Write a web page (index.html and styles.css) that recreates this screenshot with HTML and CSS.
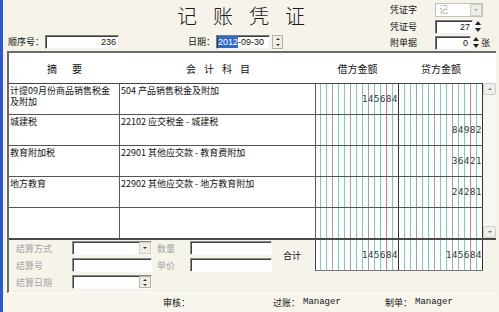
FILE: index.html
```html
<!DOCTYPE html>
<html lang="zh">
<head>
<meta charset="utf-8">
<title>记账凭证</title>
<link rel="stylesheet" href="styles.css">
</head>
<body>
<div class="win">
  <div class="top">
    <div class="top-left">
      <div class="title">记账凭证</div>
      <div class="meta">
        <span class="lbl seq-lbl">顺序号：</span>
        <span class="inp num seq">236</span>
        <span class="lbl date-lbl">日期：</span>
        <span class="inp date"><span class="hl">2012</span>-09-30</span>
        <span class="spin btn"><i class="up"></i><i class="dn"></i></span>
      </div>
    </div>
    <div class="top-right">
      <div class="rrow r1"><span class="lbl rl">凭证字</span><span class="inp combo"><span class="ctext">记</span><span class="drop"><i class="dn"></i></span></span></div>
      <div class="rrow r2"><span class="lbl rl">凭证号</span><span class="inp num w38">27</span><span class="spin bare"><i class="up"></i><i class="dn"></i></span></div>
      <div class="rrow r3"><span class="lbl rl">附单据</span><span class="inp num w36">0</span><span class="spin bare"><i class="up"></i><i class="dn"></i></span><span class="lbl zhang">张</span></div>
    </div>
  </div>

  <div class="frame">
    <div class="thead">
      <div class="h h1">摘要</div>
      <div class="h h2">会计科目</div>
      <div class="h">借方金额</div>
      <div class="h">贷方金额</div>
    </div>
    <div class="tbody">
      <div class="rows">
        <div class="row">
          <div class="c sum">计提09月份商品销售税金及附加</div>
          <div class="c acc">504 产品销售税金及附加</div>
          <div class="amt dr">145684</div>
          <div class="amt cr"></div>
        </div>
        <div class="row">
          <div class="c sum">城建税</div>
          <div class="c acc">22102 应交税金 - 城建税</div>
          <div class="amt dr"></div>
          <div class="amt cr">84982</div>
        </div>
        <div class="row">
          <div class="c sum">教育附加税</div>
          <div class="c acc">22901 其他应交款 - 教育费附加</div>
          <div class="amt dr"></div>
          <div class="amt cr">36421</div>
        </div>
        <div class="row">
          <div class="c sum">地方教育</div>
          <div class="c acc">22902 其他应交款 - 地方教育附加</div>
          <div class="amt dr"></div>
          <div class="amt cr">24281</div>
        </div>
        <div class="row">
          <div class="c sum"></div>
          <div class="c acc"></div>
          <div class="amt dr"></div>
          <div class="amt cr"></div>
        </div>
      </div>
      <div class="vscroll">
        <span class="sbtn"><i class="up"></i></span>
        <span class="strack"></span>
        <span class="sbtn"><i class="dn"></i></span>
      </div>
    </div>
    <div class="bottom">
      <div class="fields">
        <span class="flbl">结算方式</span>
        <span class="fin"><span class="drop"><i class="dn"></i></span></span>
        <span class="flbl f2">数量</span>
        <span class="fin"></span>
        <span class="flbl">结算号</span>
        <span class="fin"></span>
        <span class="flbl f2">单价</span>
        <span class="fin"></span>
        <span class="flbl">结算日期</span>
        <span class="fin"><span class="spin btn small"><i class="up"></i><i class="dn"></i></span></span>
      </div>
      <div class="total-lbl">合计</div>
      <div class="total">
        <div class="amt dr">145684</div>
        <div class="amt cr">145684</div>
      </div>
    </div>
  </div>

  <div class="status">
    <span class="st st1">审核：</span>
    <span class="st st2">过账：<span class="mgr">Manager</span></span>
    <span class="st st3">制单：<span class="mgr">Manager</span></span>
  </div>
</div>
</body>
</html>
```

FILE: styles.css
```css
* { box-sizing: border-box; margin: 0; padding: 0; }
html, body { width: 499px; height: 312px; overflow: hidden; }
body {
  background: #f5f3ea;
  font-family: "Noto Sans CJK SC", "Noto Sans", sans-serif;
  font-size: 9px;
  line-height: 11px;
  color: #111;
}
i { font-style: normal; }

.win {
  height: 312px;
  border-left: 3px solid #2a58d0;
  display: flex;
  flex-direction: column;
}

/* ---------- top ---------- */
.top { height: 51px; display: flex; flex: none; }
.top-left { width: 387px; display: flex; flex-direction: column; }
.title {
  height: 34px;
  padding: 3px 0 0 174px;
  font-size: 20px;
  line-height: 26px;
  letter-spacing: 16px;
  font-weight: 300;
  color: #1a1a1a;
  white-space: nowrap;
}
.meta { display: flex; align-items: center; height: 15px; padding-left: 5px; }
.lbl { white-space: nowrap; }
.seq-lbl { width: 37px; }
.date-lbl { margin-left: 69px; width: 28px; }

.inp {
  height: 14px;
  background: #fff;
  border: 1px solid;
  border-color: #7a7a7a #f0f0f0 #f0f0f0 #7a7a7a;
  box-shadow: inset 1px 1px 0 #3c3c3c;
  font-family: "Liberation Sans", sans-serif;
  font-size: 9px;
  line-height: 12px;
  white-space: nowrap;
  display: flex;
  align-items: center;
}
.num { justify-content: flex-end; padding-right: 2px; }
.seq { width: 74px; }
.date { width: 54px; padding-left: 1px; }
.hl { background: #316ac5; color: #fff; }
.w38 { width: 38px; }
.w36 { width: 36px; }

.top-right { display: flex; flex-direction: column; padding-top: 1px; }
.rrow { display: flex; align-items: center; }
.r1 { height: 17px; }
.r2 { height: 17px; }
.r3 { height: 15px; }
.rl { width: 45px; }
.zhang { margin-left: 1px; }

.combo {
  width: 48px;
  justify-content: space-between;
  padding-left: 3px;
  color: #b0b0b0;
  border-color: #c3c1b6;
  box-shadow: none;
}
.ctext { font-family: "Noto Sans CJK SC", sans-serif; }

/* arrows */
.up, .dn { display: flex; align-items: center; justify-content: center; flex: 1; }
.up::after, .dn::after { content: ""; width: 0; height: 0; border-left: 2px solid transparent; border-right: 2px solid transparent; }
.up::after { border-bottom: 2px solid #333; }
.dn::after { border-top: 2px solid #333; }

.drop {
  width: 12px;
  height: 12px;
  background: #eeede6;
  border: 1px solid #d0cec4;
  display: flex;
}
.combo .drop .dn::after { border-top-color: #aaa; }

.spin { display: flex; flex-direction: column; height: 14px; }
.spin.btn { width: 11px; margin-left: 2px; background: #efeee7; border: 1px solid #b5b3a8; }
.spin.bare { width: 8px; margin-left: 1px; }
.spin.bare .up::after { border-left-width: 3px; border-right-width: 3px; border-bottom: 4px solid #222; }
.spin.bare .dn::after { border-left-width: 3px; border-right-width: 3px; border-top: 4px solid #222; }

/* ---------- table frame ---------- */
.frame {
  flex: none;
  margin-left: 4px;
  width: 489px;
  border-top: 2px solid #6a6a6a;
  border-left: 2px solid #6a6a6a;
  border-bottom: 1px solid #fff;
  display: flex;
  flex-direction: column;
  background: #fff;
}
.thead {
  height: 30px;
  display: grid;
  grid-template-columns: 111px 196px 83px 84px 13px;
  align-items: center;
  font-size: 10px;
}
.h { text-align: center; white-space: nowrap; }
.h1 { letter-spacing: 15px; padding-left: 15px; }
.h2 { letter-spacing: 8px; padding-left: 8px; }

.tbody { display: flex; border-bottom: 2px solid #4a4a4a; }
.rows { width: 474px; border-top: 1px solid #444; }
.row {
  height: 31px;
  display: grid;
  grid-template-columns: 111px 196px 83px 84px;
  border-bottom: 1px solid #555;
}
.row:last-child { height: 30px; border-bottom: 0; }
.c { border-right: 1px solid #5a5a5a; }
.sum { padding: 1px 6px 0 1px; }
.acc { padding: 1px 2px 0 1px; white-space: nowrap; }

.amt {
  font-family: "DejaVu Sans Mono", monospace;
  font-size: 9px;
  letter-spacing: 0.58px;
  display: flex;
  align-items: center;
  justify-content: flex-end;
  color: #333;
  border-right: 1px solid #333;
  background:
    linear-gradient(#e07b7b, #e07b7b) right 11px top 0 / 1px 100% no-repeat,
    linear-gradient(#a2a2a2, #a2a2a2) right 29px top 0 / 1px 100% no-repeat,
    linear-gradient(#a2a2a2, #a2a2a2) right 47px top 0 / 1px 100% no-repeat,
    linear-gradient(#a2a2a2, #a2a2a2) right 65px top 0 / 1px 100% no-repeat,
    linear-gradient(to right, #7ccaca 0 1px, transparent 1px) right 0 top 0 / 6px 100% repeat-x,
    #fff;
}

.vscroll { width: 13px; display: flex; flex-direction: column; background: #f7f6f1; }
.sbtn {
  height: 12px;
  display: flex;
  background: #efeee8;
  border: 1px solid #cfcdc4;
  border-radius: 2px;
}
.sbtn .up::after { border-bottom-color: #777; }
.sbtn .dn::after { border-top-color: #777; }
.strack { flex: 1; }

/* ---------- bottom fields ---------- */
.bottom { display: flex; height: 52px; background: #f5f3ea; }
.fields {
  display: grid;
  grid-template-columns: 56px 80px 38px 82px;
  grid-auto-rows: 14px;
  row-gap: 3px;
  padding: 1px 0 0 7px;
  align-content: start;
}
.flbl { color: #a6a6a6; display: flex; align-items: center; white-space: nowrap; }
.f2 { padding-left: 5px; }
.fin {
  background: #fff;
  border: 1px solid;
  border-color: #8a8a8a #fafafa #fafafa #8a8a8a;
  box-shadow: inset 1px 1px 0 #444;
  display: flex;
  justify-content: flex-end;
  align-items: center;
}
.fin .drop { height: 12px; }
.spin.small { height: 12px; width: 12px; margin-left: 0; }

.total-lbl { width: 43px; padding-left: 11px; display: flex; align-items: center; height: 30px; }
.total { display: flex; height: 31px; border-left: 1px solid #444; border-bottom: 1px solid #777; }
.total .dr { width: 83px; }
.total .cr { width: 84px; }

/* ---------- status ---------- */
.status { flex: 1; display: flex; align-items: center; background: #f7f5ec; }
.st { white-space: nowrap; display: flex; align-items: center; }
.st1 { margin-left: 160px; width: 110px; }
.st2 { width: 112px; }
.mgr { font-family: "Liberation Mono", monospace; font-size: 9px; margin-left: 3px; }
```
